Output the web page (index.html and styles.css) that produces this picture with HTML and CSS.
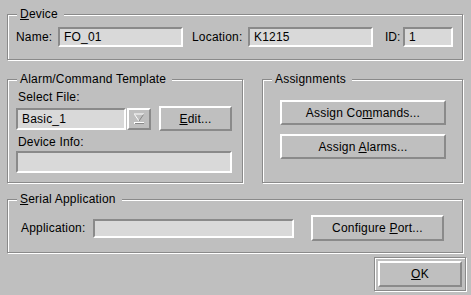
FILE: index.html
```html
<!doctype html>
<html lang="en">
	<head>
		<meta charset="utf-8">
		<title>Device</title>
		<link rel="stylesheet" href="styles.css">
	</head>
	<body>
		<div class="dialog">
			<div class="group device">
				<span class="title"><u>D</u>evice</span>
				<span class="label name-label">Name:</span>
				<div class="field name-field">FO_01</div>
				<span class="label loc-label">Location:</span>
				<div class="field loc-field">K1215</div>
				<span class="label id-label">ID:</span>
				<div class="field id-field">1</div>
			</div>

			<div class="row">
				<div class="group template">
					<span class="title">Alarm/Command Template</span>
					<div class="label">Select File:</div>
					<div class="combo-row">
						<div class="field combo-field">Basic_1</div>
						<div class="arrow">
							<svg width="14" height="12" viewBox="0 0 14 12">
								<polygon points="2,1 12,1 7,8" fill="#bfbfbf"/>
								<polyline points="2,1 12,1" stroke="#fff" fill="none"/>
								<polyline points="2.5,1.5 7,8" stroke="#fff" fill="none"/>
								<polyline points="11.5,1.5 7,8" stroke="#888" fill="none"/>
								<rect x="2" y="9" width="10" height="2" fill="#fff"/>
								<rect x="3" y="10" width="9" height="1" fill="#888"/>
							</svg>
						</div>
						<button class="btn edit-btn"><u>E</u>dit...</button>
					</div>
					<div class="label info-label">Device Info:</div>
					<div class="field info-field"></div>
				</div>

				<div class="group assign">
					<span class="title">Assignments</span>
					<button class="btn assign-btn">Assign Co<u>m</u>mands...</button>
					<button class="btn assign-btn second">Assign <u>A</u>larms...</button>
				</div>
			</div>

			<div class="group serial">
				<span class="title"><u>S</u>erial Application</span>
				<span class="label app-label">Application:</span>
				<div class="field app-field"></div>
				<button class="btn port-btn">Configure <u>P</u>ort...</button>
			</div>

			<div class="footer">
				<div class="default-frame">
					<button class="btn ok-btn"><u>O</u>K</button>
				</div>
			</div>
		</div>
	</body>
</html>
```

FILE: styles.css
```css
* {
	box-sizing: border-box;
	font-family: "Liberation Sans", Arial, sans-serif;
	font-size: 12px;
	letter-spacing: 0.2px;
}

body {
	margin: 0;
	background: #bfbfbf;
	color: #000;
}

.dialog {
	width: 471px;
	height: 295px;
	padding: 14px 8px 0 7px;
}

/* group boxes : etched line */
.group {
	position: relative;
	border: 1px solid #8a8a8a;
	box-shadow: inset 1px 1px 0 #fff, 1px 1px 0 #fff;
}

.title {
	position: absolute;
	top: -8px;
	left: 9px;
	padding: 0 6px 0 3px;
	line-height: 14px;
	background: #bfbfbf;
	white-space: nowrap;
}

.label {
	line-height: 14px;
	white-space: nowrap;
}

.field {
	height: 20px;
	background: #d9d9d9;
	border: 2px solid;
	border-color: #8a8a8a #fff #fff #8a8a8a;
	padding: 0 4px;
	line-height: 16px;
	white-space: nowrap;
}

.btn {
	display: block;
	background: #bfbfbf;
	border: 2px solid;
	border-color: #fff #8a8a8a #8a8a8a #fff;
	padding: 0;
	color: #000;
	text-align: center;
	line-height: 20px;
}

/* Device */
.device {
	width: 456px;
	height: 46px;
	display: flex;
	padding: 12px 8px 0 8px;
	align-items: flex-start;
}

.device .label {
	line-height: 20px;
}

.name-label { width: 42px; }
.name-field { width: 125px; }
.loc-label { width: 56px; margin-left: 9px; }
.loc-field { width: 125px; }
.id-label { width: 18px; margin-left: 12px; letter-spacing: 0; }
.id-field { width: 50px; }

/* middle row */
.row {
	display: flex;
	gap: 19px;
	margin-top: 19px;
}

.template {
	width: 236px;
	height: 104px;
	padding: 10px 8px 0 10px;
}

.combo-row {
	display: flex;
	align-items: center;
	height: 25px;
	margin: 2px 0 0 -2px;
}

.combo-field {
	width: 110px;
	height: 22px;
	line-height: 18px;
}

.arrow {
	width: 24px;
	height: 22px;
	margin-left: 1px;
	border: 2px solid;
	border-color: #fff #8a8a8a #8a8a8a #fff;
	display: flex;
	align-items: center;
	justify-content: center;
}

.edit-btn {
	width: 73px;
	height: 25px;
	margin-left: 8px;
}

.info-label {
	margin-top: 4px;
}

.info-field {
	width: 216px;
	height: 22px;
	margin: 2px 0 0 -2px;
}

.assign {
	width: 201px;
	height: 104px;
	padding: 20px 0 0 17px;
}

.assign-btn {
	width: 166px;
	height: 25px;
}

.assign-btn.second {
	margin-top: 9px;
}

/* Serial */
.serial {
	width: 456px;
	height: 54px;
	margin-top: 16px;
	display: flex;
	padding: 15px 0 0 13px;
	align-items: flex-start;
}

.app-label {
	width: 72px;
	line-height: 26px;
}

.app-field {
	width: 201px;
	height: 19px;
	margin-top: 4px;
	line-height: 15px;
}

.port-btn {
	width: 133px;
	height: 26px;
	margin-left: 17px;
}

/* OK */
.footer {
	display: flex;
	justify-content: flex-end;
	margin: 4px -3px 0 0;
}

.default-frame {
	border: 1px solid #8a8a8a;
	box-shadow: inset 1px 1px 0 #fff, 1px 1px 0 #fff;
	padding: 3px;
}

.ok-btn {
	width: 84px;
	height: 26px;
}
```
